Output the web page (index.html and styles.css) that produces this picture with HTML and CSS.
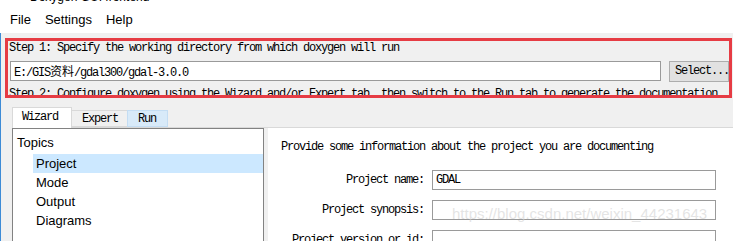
FILE: index.html
```html
<!DOCTYPE html>
<html>
<head>
  <title>Doxygen GUI frontend</title>
  <link rel="stylesheet" href="styles.css">
</head>
<body>
  <div class="titlebar"><span class="title-text">Doxygen GUI frontend</span></div>
  <div class="menubar">
    <span class="menu-item">File</span>
    <span class="menu-item">Settings</span>
    <span class="menu-item">Help</span>
  </div>

  <div class="window">
    <div class="step-box">
      <div class="step-inner">
        <div class="mono step-text">Step 1: Specify the working directory from which doxygen will run</div>
        <div class="dir-row">
          <div class="mono line-edit dir-edit">E:/GIS<span class="cjk">资料</span>/gdal300/gdal-3.0.0</div>
          <div class="mono button">Select...</div>
        </div>
        <div class="mono step-text">Step 2: Configure doxygen using the Wizard and/or Expert tab, then switch to the Run tab to generate the documentation</div>
      </div>
    </div>

    <div class="tabs">
      <div class="mono tab tab-selected">Wizard</div>
      <div class="mono tab">Expert</div>
      <div class="mono tab tab-hover">Run</div>
    </div>

    <div class="pane">
      <div class="tree">
        <div class="tree-root">Topics</div>
        <div class="tree-item tree-item-selected">Project</div>
        <div class="tree-item">Mode</div>
        <div class="tree-item">Output</div>
        <div class="tree-item">Diagrams</div>
      </div>

      <div class="wizard-page">
        <div class="mono intro">Provide some information about the project you are documenting</div>
        <div class="form">
          <div class="mono form-label">Project name:</div>
          <div class="mono line-edit">GDAL</div>
          <div class="mono form-label">Project synopsis:</div>
          <div class="mono line-edit"></div>
          <div class="mono form-label">Project version or id:</div>
          <div class="mono line-edit"></div>
        </div>
      </div>
    </div>

    <div class="watermark">https://blog.csdn.net/weixin_44231643</div>
  </div>
</body>
</html>
```

FILE: styles.css
```css
html, body {
  margin: 0;
  padding: 0;
}

body {
  width: 733px;
  height: 241px;
  overflow: hidden;
  position: relative;
  background-color: #ffffff;
  font-family: "Liberation Sans", Arial, sans-serif;
  font-size: 13px;
  color: #000000;
}

.mono {
  font-family: "Liberation Mono", "Courier New", monospace;
  font-size: 12px;
  letter-spacing: -1.2px;
  white-space: nowrap;
}

.cjk {
  font-family: "Noto Sans CJK SC", sans-serif;
  letter-spacing: 0;
}

/* title bar, only the bottom of its text is in the picture */
.titlebar {
  height: 6px;
  overflow: hidden;
  padding-left: 30px;
  font-size: 12px;
}

.title-text {
  display: block;
  line-height: 12px;
  margin-top: -9px;
}

.menubar {
  height: 27px;
  line-height: 27px;
  padding-left: 3px;
  display: flex;
  background-color: #ffffff;
}

.menu-item {
  padding: 0 7px;
}

.window {
  height: 208px;
  overflow: hidden;
  border-left: 1px solid #3d8bd6;
  background-color: #f0f0f0;
  padding-top: 5px;
  box-sizing: border-box;
}

/* red marker round step 1 */
.step-box {
  margin: 0 1px 0 4px;
  border: 3px solid #e63c44;
}

.step-inner {
  height: 54px;
  overflow: hidden;
  padding-left: 1px;
}

.step-text {
  height: 14px;
  line-height: 14px;
}

.dir-row {
  display: flex;
  gap: 8px;
  margin: 6px 0 6px 1px;
  height: 20px;
}

.line-edit {
  box-sizing: border-box;
  height: 20px;
  line-height: 18px;
  border: 1px solid #9a9a9a;
  background-color: #ffffff;
  padding-left: 3px;
  overflow: hidden;
}

.dir-edit {
  flex: 1;
}

.button {
  box-sizing: border-box;
  width: 60px;
  height: 21px;
  line-height: 19px;
  border: 1px solid #adadad;
  background-color: #e1e1e1;
  padding-left: 5px;
  flex-shrink: 0;
}

/* tabs */
.tabs {
  display: flex;
  align-items: flex-end;
  height: 20px;
  margin: 9px 0 0 11px;
}

.tab {
  box-sizing: border-box;
  height: 17px;
  line-height: 16px;
  padding: 0 9px 0 10px;
  border: 1px solid #d9d9d9;
  background-color: #f0f0f0;
  margin-left: -1px;
}

.tab-selected {
  height: 21px;
  line-height: 19px;
  margin-left: 0;
  margin-bottom: -1px;
  padding: 0 13px 0 9px;
  border-bottom: none;
  background-color: #ffffff;
  position: relative;
  z-index: 1;
}

.tab-hover {
  background-color: #d8eaf9;
  border-color: #c4ddf3;
  padding: 0 11px 0 10px;
}

.pane {
  display: flex;
  margin-left: 11px;
  border-top: 1px solid #d9d9d9;
  height: 120px;
}

.tree {
  box-sizing: border-box;
  width: 252px;
  border: 1px solid #828282;
  background-color: #ffffff;
  padding-top: 4px;
}

.tree-root {
  height: 19px;
  line-height: 19px;
  padding-left: 4px;
  margin-bottom: 2px;
}

.tree-item {
  height: 19px;
  line-height: 19px;
  margin-left: 20px;
  padding-left: 3px;
}

.tree-item-selected {
  background-color: #cce8ff;
}

.wizard-page {
  flex: 1;
  margin-left: 4px;
  background-color: #ffffff;
  padding: 12px 0 0 13px;
}

.intro {
  height: 14px;
  line-height: 14px;
}

.form {
  display: grid;
  grid-template-columns: 143px 284px;
  grid-auto-rows: 20px;
  column-gap: 8px;
  row-gap: 10px;
  margin-top: 16px;
}

.form-label {
  text-align: right;
  line-height: 20px;
}

.watermark {
  position: absolute;
  left: 452px;
  top: 205px;
  font-family: "Liberation Sans", Arial, sans-serif;
  font-size: 15px;
  color: rgba(210, 210, 210, 0.6);
  white-space: nowrap;
}
```
